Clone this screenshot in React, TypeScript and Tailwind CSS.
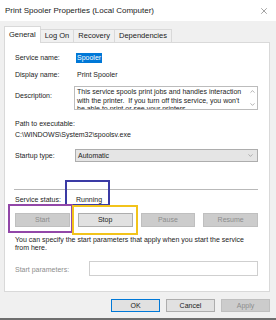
import { X, ChevronUp, ChevronDown } from "lucide-react";

const TABS = ["General", "Log On", "Recovery", "Dependencies"];

const ACTIONS = [
  { label: "Start", enabled: false },
  { label: "Stop", enabled: true },
  { label: "Pause", enabled: false },
  { label: "Resume", enabled: false },
];

function Label({ children }: { children: React.ReactNode }) {
  return <div className="w-[61px] shrink-0">{children}</div>;
}

export default function App() {
  return (
    <div
      className="relative w-[276px] h-[320px] overflow-hidden bg-[#f0f0f0] text-[7px] leading-[12px] text-[#1b1b1b] flex flex-col"
      style={{ fontFamily: '"Liberation Sans", Arial, sans-serif' }}
    >
      {/* title bar */}
      <div className="h-[21px] shrink-0 bg-white flex items-center justify-between pl-[5px] pr-[7px]">
        <span className="text-[8px]">Print Spooler Properties (Local Computer)</span>
        <X size={10} strokeWidth={1} className="text-[#222]" />
      </div>

      {/* tabs */}
      <div className="flex items-end h-[19px] mt-[2px] pl-[4px] text-[7.5px]">
        {TABS.map((t, i) =>
          i === 0 ? (
            <div
              key={t}
              className="h-[17px] px-[4px] bg-white border border-b-0 border-[#d9d9d9] flex items-center relative z-10 -mb-px"
            >
              {t}
            </div>
          ) : (
            <div
              key={t}
              className="h-[13px] px-[4px] border border-l-0 border-b-0 border-[#d9d9d9] flex items-center"
            >
              {t}
            </div>
          )
        )}
      </div>

      {/* panel */}
      <div className="mx-[4px] w-[266px] h-[250px] shrink-0 bg-white border border-[#d9d9d9] pt-[9px] pl-[10px] pr-[11px] flex flex-col">
        <div className="flex h-[12px] items-center">
          <Label>Service name:</Label>
          <span className="bg-[#0078d7] text-white px-[1px] leading-[10px]">Spooler</span>
        </div>
        <div className="flex h-[12px] items-center mt-[5px]">
          <Label>Display name:</Label>
          <span className="ml-[1px]">Print Spooler</span>
        </div>
        <div className="flex mt-[5px]">
          <div className="w-[59px] shrink-0 pt-[4px]">Description:</div>
          <div className="h-[24px] flex-1 border border-[#bcbcbc] flex overflow-hidden">
            <div className="flex-1 pl-[2px] leading-[8.5px] pt-[1px] overflow-hidden">
              This service spools print jobs and handles interaction with the printer.&nbsp; If you turn off this service, you won't be able to print or see your printers.
            </div>
            <div className="w-[9px] flex flex-col items-center justify-between py-[1px] text-[#555]">
              <ChevronUp size={7} strokeWidth={1.5} />
              <ChevronDown size={7} strokeWidth={1.5} />
            </div>
          </div>
        </div>
        <div className="h-[11px] flex items-center mt-[8px]">Path to executable:</div>
        <div className="h-[11px] flex items-center">C:\WINDOWS\System32\spoolsv.exe</div>
        <div className="flex items-center mt-[9px]">
          <div className="w-[60px] shrink-0">Startup type:</div>
          <div className="h-[13px] flex-1 bg-[#e5e5e5] border border-[#adadad] flex items-center justify-between pl-[2px] pr-[3px]">
            <span>Automatic</span>
            <ChevronDown size={7} strokeWidth={1.2} className="text-[#444]" />
          </div>
        </div>

        <div className="h-px bg-[#b9b9b9] mt-[27px] ml-[-1px]" />

        <div className="flex h-[12px] items-center mt-[4px]">
          <Label>Service status:</Label>
          <span>Running</span>
        </div>
        <div className="grid grid-cols-4 gap-[8px] h-[13px] mt-[7px]">
          {ACTIONS.map((a) => (
            <div
              key={a.label}
              className={
                a.enabled
                  ? "bg-[#e1e1e1] border border-[#adadad] flex items-center justify-center"
                  : "bg-[#cccccc] border border-[#bfbfbf] text-[#8d8d8d] flex items-center justify-center"
              }
            >
              {a.label}
            </div>
          ))}
        </div>
        <div className="mt-[10px] leading-[8px]">
          You can specify the start parameters that apply when you start the service from here.
        </div>
        <div className="flex items-center mt-[9px]">
          <div className="w-[74px] shrink-0 text-[#8d8d8d] pt-[2px]">Start parameters:</div>
          <div className="h-[15px] flex-1 border border-[#cfcfcf] bg-white" />
        </div>
      </div>

      {/* dialog buttons */}
      <div className="flex justify-end gap-[6px] pr-[6px] mt-[7px]">
        <div className="w-[49px] h-[13px] bg-[#e1e1e1] border border-[#0078d7] flex items-center justify-center">OK</div>
        <div className="w-[49px] h-[13px] bg-[#e1e1e1] border border-[#adadad] flex items-center justify-center">Cancel</div>
        <div className="w-[49px] h-[13px] bg-[#cccccc] border border-[#bfbfbf] text-[#8d8d8d] flex items-center justify-center">Apply</div>
      </div>
      <div className="mt-auto h-[2px] bg-[#6e6e6e]" />

      {/* annotation boxes */}
      <div className="absolute left-[65px] top-[180px] w-[45px] h-[26px] border-2 border-[#3b3ba5]" />
      <div className="absolute left-[8px] top-[204px] w-[65px] h-[29px] border-2 border-[#9247a8]" />
      <div className="absolute left-[72px] top-[205px] w-[66px] h-[30px] border-2 border-[#f2c31b]" />
    </div>
  );
}
